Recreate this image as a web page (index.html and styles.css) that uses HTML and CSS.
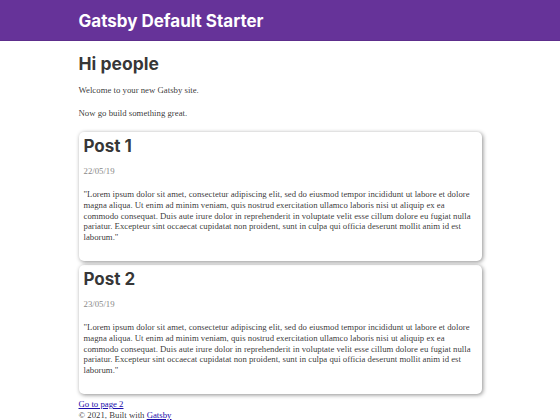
FILE: index.html
```html
<!DOCTYPE html>
<html lang="en">

<head>
    <meta charset="UTF-8">
    <meta name="viewport" content="width=device-width, initial-scale=1.0">
    <title>Home | Gatsby Default Starter</title>
    <link rel="stylesheet" href="styles.css">
</head>

<body>
    <header class="site-header">
        <div class="header-inner">
            <h1 class="site-title"><a href="#">Gatsby Default Starter</a></h1>
        </div>
    </header>
    <div class="page">
        <main>
            <h1 class="page-title">Hi people</h1>
            <p>Welcome to your new Gatsby site.</p>
            <p class="intro-last">Now go build something great.</p>

            <article class="post">
                <h2 class="post-title">Post 1</h2>
                <div class="post-date">22/05/19</div>
                <p class="post-body">"Lorem ipsum dolor sit amet, consectetur adipiscing elit, sed do eiusmod tempor incididunt ut labore et dolore magna aliqua. Ut enim ad minim veniam, quis nostrud exercitation ullamco laboris nisi ut aliquip ex ea commodo consequat. Duis aute irure dolor in reprehenderit in voluptate velit esse cillum dolore eu fugiat nulla pariatur. Excepteur sint occaecat cupidatat non proident, sunt in culpa qui officia deserunt mollit anim id est laborum."</p>
            </article>

            <article class="post">
                <h2 class="post-title">Post 2</h2>
                <div class="post-date">23/05/19</div>
                <p class="post-body">"Lorem ipsum dolor sit amet, consectetur adipiscing elit, sed do eiusmod tempor incididunt ut labore et dolore magna aliqua. Ut enim ad minim veniam, quis nostrud exercitation ullamco laboris nisi ut aliquip ex ea commodo consequat. Duis aute irure dolor in reprehenderit in voluptate velit esse cillum dolore eu fugiat nulla pariatur. Excepteur sint occaecat cupidatat non proident, sunt in culpa qui officia deserunt mollit anim id est laborum."</p>
            </article>

            <a class="next-link" href="#">Go to page 2</a>
        </main>
        <footer class="site-footer">
            © 2021, Built with <a href="#">Gatsby</a>
        </footer>
    </div>
</body>

</html>
```

FILE: styles.css
```css
body {
    margin: 0;
    font-family: "Liberation Serif", Georgia, serif;
    font-size: 8.75px;
    color: hsla(0, 0%, 0%, 0.8);
    background: #fff;
}

.site-header {
    background: #663399;
    height: 41px;
    border-bottom: 1px solid #5d2e8c;
    box-sizing: border-box;
}

.header-inner {
    max-width: 403px;
    margin: 0 auto;
    padding-top: 11px;
}

.site-title {
    margin: 0;
    font-family: Inter, "Liberation Sans", sans-serif;
    font-size: 17px;
    font-weight: 700;
    line-height: 20px;
}

.site-title a {
    color: #fff;
    text-decoration: none;
}

.page {
    max-width: 403px;
    margin: 0 auto;
}

.page-title {
    margin: 11px 0 7px;
    font-family: Inter, "Liberation Sans", sans-serif;
    font-size: 17.5px;
    font-weight: 700;
    color: hsla(0, 0%, 0%, 0.8);
    line-height: 24px;
}

main p {
    margin: 0 0 9px;
    line-height: 14px;
}

main .intro-last {
    margin-bottom: 12px;
}

.post {
    border-radius: 5px;
    box-shadow: 1px 1px 4px rgba(0, 0, 0, 0.45);
    padding: 4px 5px 18px;
    margin-bottom: 4px;
}

.post-title {
    margin: 0;
    font-family: Inter, "Liberation Sans", sans-serif;
    font-size: 17px;
    font-weight: 700;
    line-height: 20px;
}

.post-date {
    margin-top: 8px;
    color: #888;
    line-height: 14px;
}

.post .post-body {
    margin: 11px 0 0;
    line-height: 10.8px;
}

.next-link {
    display: inline-block;
    margin-top: 1px;
    color: #1a0dab;
    line-height: 11px;
}

.site-footer {
    line-height: 11px;
}

.site-footer a {
    color: #1a0dab;
}
```
